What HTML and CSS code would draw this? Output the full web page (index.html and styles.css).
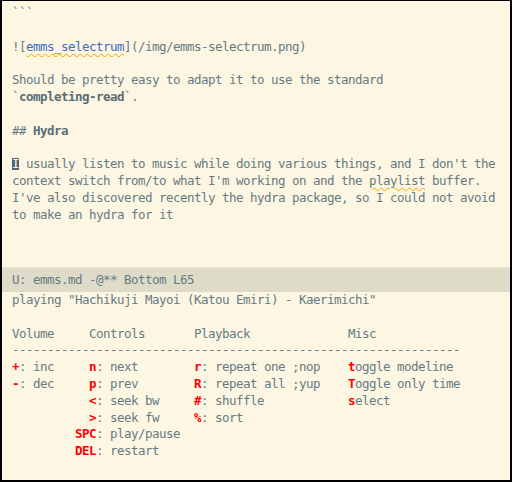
FILE: index.html
```html
<!DOCTYPE html>
<html>
<head>
<meta charset="utf-8">
<link rel="stylesheet" href="styles.css">
</head>
<body>
<div class="frame">
  <div class="buffer">
    <div class="ln">```</div>
    <div class="ln"> </div>
    <div class="ln">![<span class="link spell">emms_selectrum</span>](/img/emms-selectrum.png)</div>
    <div class="ln"> </div>
    <div class="ln">Should be pretty easy to adapt it to use the standard</div>
    <div class="ln">`<b class="strong">completing-read</b>`.</div>
    <div class="ln"> </div>
    <div class="ln">## <b class="strong">Hydra</b></div>
    <div class="ln"> </div>
    <div class="ln"><span class="cursor">I</span> usually listen to music while doing various things, and I don't the</div>
    <div class="ln">context switch from/to what I'm working on and the <span class="spell">playlist</span> buffer.</div>
    <div class="ln">I've also discovered recently the hydra package, so I could not avoid</div>
    <div class="ln">to make an hydra for it</div>
  </div>
  <div class="modeline">U: emms.md -@** Bottom L65</div>
  <div class="echo">
    <div class="ln">playing "Hachikuji Mayoi (Katou Emiri) - Kaerimichi"</div>
    <div class="ln"> </div>
    <div class="ln">Volume     Controls       Playback              Misc</div>
    <div class="ln">----------------------------------------------------------------</div>
    <div class="ln"><b class="key">+</b>: inc     <b class="key">n</b>: next        <b class="key">r</b>: repeat one ;nop    <b class="key">t</b>oggle modeline</div>
    <div class="ln"><b class="key">-</b>: dec     <b class="key">p</b>: prev        <b class="key">R</b>: repeat all ;yup    <b class="key">T</b>oggle only time</div>
    <div class="ln">           <b class="key">&lt;</b>: seek bw     <b class="key">#</b>: shuffle            <b class="key">s</b>elect</div>
    <div class="ln">           <b class="key">&gt;</b>: seek fw     <b class="key">%</b>: sort</div>
    <div class="ln">         <b class="key">SPC</b>: play/pause</div>
    <div class="ln">         <b class="key">DEL</b>: restart</div>
  </div>
</div>
</body>
</html>
```
FILE: styles.css
```css
html, body {
  margin: 0;
  padding: 0;
  background: #000;
}
.frame {
  box-sizing: border-box;
  width: 512px;
  height: 482px;
  border-style: solid;
  border-color: #000;
  border-width: 1px 2px 2px 2px;
  background: #fdf6e3;
  color: #657b83;
  font-family: "DejaVu Sans Mono", monospace;
  font-size: 12.5px;
  letter-spacing: -0.525px;
  overflow: hidden;
  display: flex;
  flex-direction: column;
}
.ln {
  white-space: pre;
  line-height: 16.8px;
  height: 16.8px;
}
.buffer {
  height: 266px;
  box-sizing: border-box;
  padding: 4px 0 0 10px;
  overflow: hidden;
  flex: none;
}
.modeline {
  flex: none;
  height: 25px;
  box-sizing: border-box;
  border-top: 1px solid #ece8d7;
  background: #dfdbc9;
  padding: 4px 0 0 10px;
  line-height: 16.8px;
  white-space: pre;
}
.echo {
  flex: 1;
  padding-left: 10px;
}
.strong {
  font-weight: bold;
  color: #586e75;
}
.link {
  color: #3d6cc4;
}
.spell {
  text-decoration: underline wavy #f2a100;
  text-decoration-thickness: 1px;
  text-underline-offset: 2px;
}
.cursor {
  display: inline-block;
  background: #51666f;
  color: #fdf6e3;
  width: 7px;
  height: 12px;
  line-height: 12px;
  letter-spacing: 0;
  text-align: center;
}
.key {
  color: #f00;
  font-weight: bold;
}
```
